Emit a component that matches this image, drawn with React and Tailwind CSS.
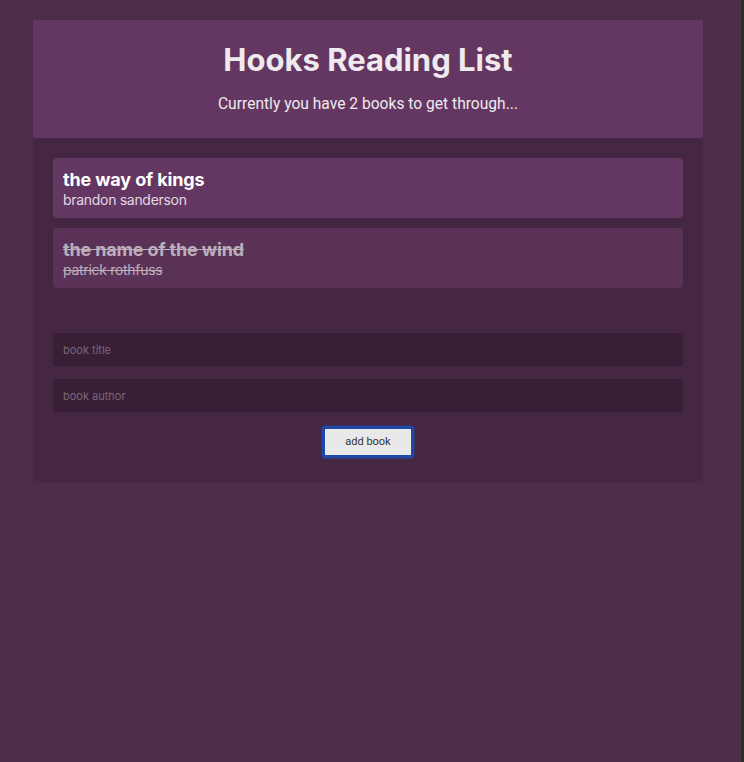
import { useState } from 'react';

const initialBooks = [
  { id: 1, title: 'the way of kings', author: 'brandon sanderson', read: false },
  { id: 2, title: 'the name of the wind', author: 'patrick rothfuss', read: true },
];

function BookItem({ book }) {
  return (
    <li
      className={`h-[60px] rounded px-[10px] pt-[11px] mb-[10px] ${
        book.read ? 'bg-[#5a3257] text-[#bcaebb] line-through' : 'bg-[#643762] text-white'
      }`}
    >
      <div className="text-[18px] font-bold leading-[22px] tracking-[-0.15px]">{book.title}</div>
      <div className={`text-[14px] leading-[18px] tracking-[-0.3px] ${book.read ? '' : 'text-[#e2d8e1]'}`}>
        {book.author}
      </div>
    </li>
  );
}

export default function App() {
  const [books] = useState(initialBooks);
  const [title, setTitle] = useState('');
  const [author, setAuthor] = useState('');
  const toRead = books.length;

  return (
    <div className="min-h-[762px] flex bg-[#4d2c4b]" style={{ fontFamily: 'Inter, "Noto Sans", sans-serif' }}>
      <div className="flex-1 pl-[33px] pt-[20px]">
        <div className="w-[670px]">
          <header className="bg-[#643762] flex flex-col items-center pt-[22px] pb-[22px] text-[#eeeaee]">
            <h1 className="text-[31px] font-bold leading-[36px]">Hooks Reading List</h1>
            <p className="mt-[14px] text-[15.6px] leading-[24px]" style={{ fontFamily: 'Roboto, sans-serif' }}>
              Currently you have {toRead} books to get through...
            </p>
          </header>
          <div className="bg-[#452643] px-[20px] pt-[20px] pb-[25px]">
            <ul>
              {books.map((b) => (
                <BookItem key={b.id} book={b} />
              ))}
            </ul>
            <form className="mt-[45px] flex flex-col" onSubmit={(e) => e.preventDefault()}>
              <input
                className="h-[33px] bg-[#381f36] px-[10px] pt-[1px] text-[11px] text-white placeholder:text-[#7c657a] outline-none"
                placeholder="book title"
                value={title}
                onChange={(e) => setTitle(e.target.value)}
              />
              <input
                className="mt-[13px] h-[33px] bg-[#381f36] px-[10px] text-[11px] text-white placeholder:text-[#7c657a] outline-none"
                placeholder="book author"
                value={author}
                onChange={(e) => setAuthor(e.target.value)}
              />
              <button
                type="submit"
                className="mt-[14px] self-center w-[92px] h-[32px] bg-[#e9e9e9] border-[3px] border-[#1d48a8] rounded-[3px] text-[11px] text-[#333] shadow-[0_0_2px_#2a5ad0]"
                style={{ fontFamily: 'Roboto, sans-serif' }}
              >
                add book
              </button>
            </form>
          </div>
        </div>
      </div>
      <div className="w-[4px] bg-[#2d2d2d] border-l border-[#3a3a3a]" />
    </div>
  );
}
